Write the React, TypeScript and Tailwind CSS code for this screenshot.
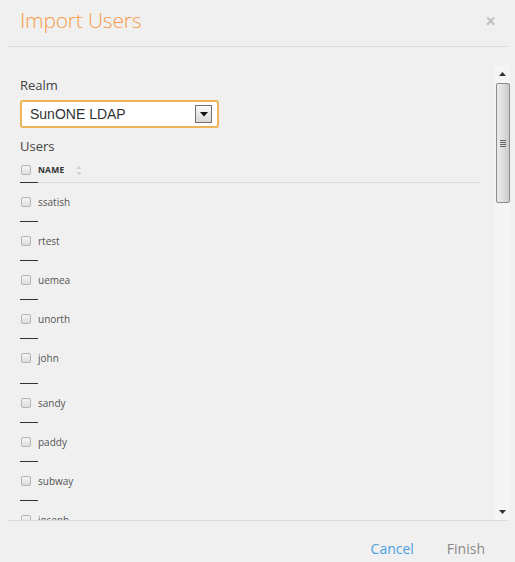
import React from "react";

const users = ["ssatish", "rtest", "uemea", "unorth", "john", "sandy", "paddy", "subway", "joseph"];

function Box() {
  return (
    <span className="block w-[10px] h-[10px] rounded-[2px] border border-[#b4b4b4] bg-gradient-to-b from-[#f4f4f4] to-[#dedede] shrink-0" />
  );
}

export default function App() {
  return (
    <div
      className="w-[515px] h-[562px] bg-[#f0f0f0] flex flex-col overflow-hidden"
      style={{ fontFamily: '"Open Sans", "Noto Sans", sans-serif' }}
    >
      {/* header */}
      <div className="h-[46px] flex items-center justify-between pl-[20px] pr-[19px] shrink-0">
        <span className="text-[21px] font-light text-[#f79a48] leading-none -mt-[5px] tracking-[-0.2px]">Import Users</span>
        <span className="text-[19px] text-[#c2c2c2] font-bold leading-none -mt-[4px]">×</span>
      </div>
      <div className="mx-[7px] h-px bg-[#dcdcdc] shrink-0" />

      {/* body */}
      <div className="h-[18px] shrink-0" />
      <div className="h-[455px] flex pl-[7px] pr-[5px] shrink-0">
        <div className="flex-1 overflow-hidden pl-[13px] pr-[16px] pt-[11px]">
          <div className="text-[13px] leading-[18px] text-[#444]">Realm</div>
          <div className="mt-[6px] w-[199px] h-[28px] rounded-[3px] border-2 border-[#efb55a] bg-white flex items-center justify-between pl-[8px] pr-[5px]">
            <span className="text-[14px] text-[#333]" style={{ fontFamily: '"Liberation Sans", Arial, sans-serif' }}>
              SunONE LDAP
            </span>
            <span className="w-[17px] h-[18px] border border-[#707070] bg-gradient-to-b from-[#fafafa] to-[#d8d8d8] flex items-center justify-center">
              <svg width="8" height="5" viewBox="0 0 8 5">
                <path d="M0 0 H8 L4 4.5 Z" fill="#111" />
              </svg>
            </span>
          </div>
          <div className="mt-[9px] text-[13px] leading-[18px] text-[#444]">Users</div>

          {/* table header */}
          <div className="h-[27px] pt-[3px] flex items-center pl-[1px]">
            <Box />
            <span className="ml-[7px] text-[8.5px] font-bold text-[#333] tracking-[0.2px]">NAME</span>
            <svg className="ml-[12px]" width="6" height="11" viewBox="0 0 6 11">
              <path d="M3 0.5 L5.5 4 H0.5 Z" fill="#d2d2d2" />
              <path d="M3 10.5 L5.5 7 H0.5 Z" fill="#d2d2d2" />
            </svg>
          </div>
          <div className="flex h-px">
            <div className="w-[18px] bg-[#333]" />
            <div className="flex-1 bg-[#dadada]" />
          </div>

          {users.map((u) => (
            <div key={u}>
              <div className={`h-[38px] flex items-center pl-[1px] ${u === "john" ? "mb-[6px]" : ""}`}>
                <Box />
                <span className="ml-[7px] text-[10px] text-[#555]">{u}</span>
              </div>
              <div className="w-[18px] h-px bg-[#333]" />
            </div>
          ))}
        </div>

        {/* scrollbar */}
        <div className="w-[15px] bg-[#f5f5f5] flex flex-col items-center">
          <div className="h-[18px] flex items-center justify-center">
            <svg width="7" height="4" viewBox="0 0 7 4">
              <path d="M3.5 0 L7 4 H0 Z" fill="#333" />
            </svg>
          </div>
          <div className="w-[14px] h-[120px] rounded-[2px] border border-[#8c8c8c] bg-gradient-to-r from-[#ebebeb] via-[#dedede] to-[#c9c9c9] flex items-center justify-center">
            <div className="flex flex-col gap-[1px]">
              <div className="w-[6px] h-px bg-[#666]" />
              <div className="w-[6px] h-px bg-[#666]" />
              <div className="w-[6px] h-px bg-[#666]" />
              <div className="w-[6px] h-px bg-[#666]" />
            </div>
          </div>
          <div className="flex-1" />
          <div className="h-[16px] flex items-center justify-center">
            <svg width="7" height="4" viewBox="0 0 7 4">
              <path d="M0 0 H7 L3.5 4 Z" fill="#333" />
            </svg>
          </div>
        </div>
      </div>

      <div className="mx-[7px] h-px bg-[#dcdcdc] shrink-0" />

      {/* footer */}
      <div className="flex-1 flex items-center justify-end pr-[30px] gap-[33px] pt-[14px]">
        <span className="text-[14px] text-[#4d9fe0]">Cancel</span>
        <span className="text-[14px] text-[#8a8a8a]">Finish</span>
      </div>
    </div>
  );
}
